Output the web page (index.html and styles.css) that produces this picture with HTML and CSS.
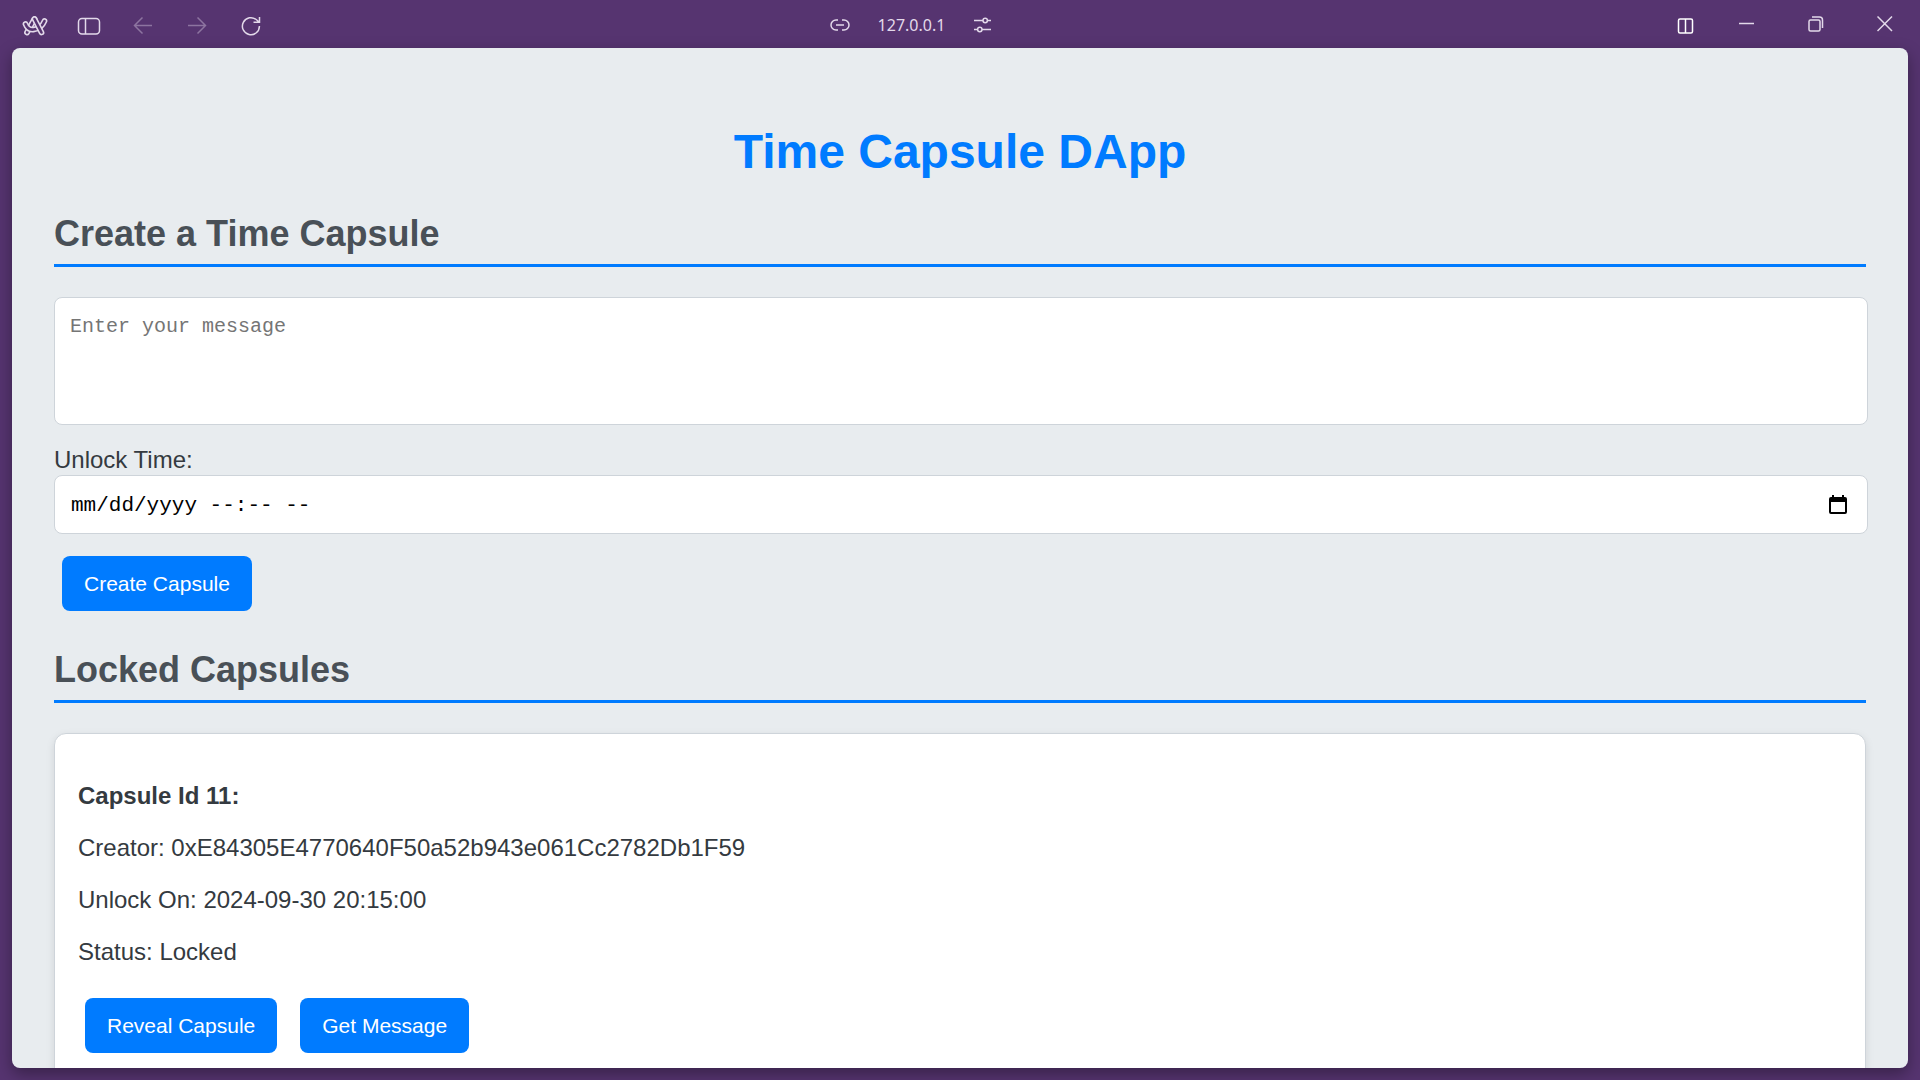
FILE: index.html
```
<!DOCTYPE html>
<html lang="en">
<head>
<meta charset="utf-8">
<title>Time Capsule DApp</title>
<link rel="stylesheet" href="styles.css">
</head>
<body>
<div class="browser">
  <header class="toolbar">
    <nav class="tools" aria-label="Navigation">
      <button class="tool" type="button" aria-label="Menu">
        <svg width="26" height="22" viewBox="0 0 26 22">
          <path class="outer" d="M12.500 4L5 17.500"/>
          <path class="inner" d="M12.500 4L5 17.500"/>
          <path class="outer" d="M3.500 9C5 13 8 15 11.500 14.500C17 14 20.500 11 22.500 6"/>
          <path class="inner" d="M3.500 9C5 13 8 15 11.500 14.500C17 14 20.500 11 22.500 6"/>
          <path class="outer" d="M12.500 4L19.500 17.500"/>
          <path class="inner" d="M12.500 4L19.500 17.500"/>
        </svg>
      </button>
      <button class="tool" type="button" aria-label="Sidebar">
        <svg width="24" height="20" viewBox="0 0 24 20"><rect class="line" x="1.500" y="2.500" width="21" height="15.500" rx="3.500"/><path class="line" d="M8.500 2.500V18"/></svg>
      </button>
      <button class="tool faded" type="button" aria-label="Back">
        <svg width="20" height="20" viewBox="0 0 20 20"><path class="line" d="M9.500 1.500L1.500 9.500L9.500 17.500M1.500 9.500H19"/></svg>
      </button>
      <button class="tool faded" type="button" aria-label="Forward">
        <svg width="20" height="20" viewBox="0 0 20 20"><path class="line" d="M10.500 1.500L18.500 9.500L10.500 17.500M18.500 9.500H1"/></svg>
      </button>
      <button class="tool" type="button" aria-label="Reload">
        <svg width="20" height="20" viewBox="0 0 20 20"><path class="line" d="M18.400 10A8.500 8.500 0 1 1 15.500 3.800L18 6M18.500 1V6.200H12.500"/></svg>
      </button>
    </nav>
    <div class="address">
      <svg width="20" height="14" viewBox="0 0 20 14"><path class="line" d="M8 2H6a5 5 0 0 0 0 10H8M12 2h2a5 5 0 0 1 0 10H12M6 7h8"/></svg>
      <span>127.0.0.1</span>
      <svg width="20" height="18" viewBox="0 0 20 18"><path class="line" d="M1 4.500H10M14.500 4.500H18M1 13.500H4.500M9 13.500H18"/><circle class="line" cx="12.200" cy="4.500" r="2.200"/><circle class="line" cx="6.800" cy="13.500" r="2.200"/></svg>
    </div>
    <div class="window-controls">
      <button class="tool bright" type="button" aria-label="Split view">
        <svg width="18" height="18" viewBox="0 0 18 18"><rect class="line" x="2.500" y="2" width="14" height="14" rx="1.500"/><path class="line" d="M9.500 2V16"/></svg>
      </button>
      <button class="control" type="button" aria-label="Minimize">
        <svg width="16" height="16" viewBox="0 0 16 16"><path class="line" d="M0 7.500H15"/></svg>
      </button>
      <button class="control" type="button" aria-label="Restore">
        <svg width="16" height="16" viewBox="0 0 16 16"><rect class="line" x="1" y="4" width="11" height="11" rx="1.500"/><path class="line" d="M4 1H11.500a3 3 0 0 1 3 3V12"/></svg>
      </button>
      <button class="control" type="button" aria-label="Close">
        <svg width="16" height="16" viewBox="0 0 16 16"><path class="line" d="M.5 .5L15 15M15 .5L.5 15"/></svg>
      </button>
    </div>
  </header>
  <main class="page">
    <h1>Time Capsule DApp</h1>
    <section>
      <h2>Create a Time Capsule</h2>
      <form class="create">
        <textarea class="field message" placeholder="Enter your message" aria-label="Message"></textarea>
        <label for="unlock">Unlock Time:</label>
        <div class="field date">
          <input id="unlock" type="text" placeholder="mm/dd/yyyy --:-- --">
          <button type="button" aria-label="Show date picker">
            <svg width="18" height="20" viewBox="0 0 18 20"><path d="M2 2H3V0H5V2H13V0H15V2H16A2 2 0 0 1 18 4V17A2 2 0 0 1 16 19H2A2 2 0 0 1 0 17V4A2 2 0 0 1 2 2ZM2 7V17H16V7Z" fill="#000" fill-rule="evenodd"/></svg>
          </button>
        </div>
        <button class="action" type="button">Create Capsule</button>
      </form>
    </section>
    <section>
      <h2>Locked Capsules</h2>
      <article class="card">
        <p><strong>Capsule Id 11:</strong></p>
        <p>Creator: 0xE84305E4770640F50a52b943e061Cc2782Db1F59</p>
        <p>Unlock On: 2024-09-30 20:15:00</p>
        <p>Status: Locked</p>
        <div class="actions">
          <button class="action" type="button">Reveal Capsule</button>
          <button class="action" type="button">Get Message</button>
        </div>
      </article>
    </section>
  </main>
</div>
</body>
</html>
```
FILE: styles.css
```
* { box-sizing: border-box; }

body {
  margin: 0;
  background: #563470;
  color: #343a40;
  font: 24px/28px "Liberation Sans", Arial, sans-serif;
}

.browser {
  display: flex;
  flex-direction: column;
  height: 100vh;
  padding: 0 12px 12px;
  overflow: hidden;
}

/* Browser toolbar */
.toolbar {
  display: grid;
  grid-template-columns: 1fr auto 1fr;
  flex: none;
  height: 48px;
  margin: 0 -11px 0 -4px;
  color: #e3d9ea;
}

.tools, .window-controls { display: flex; }
.window-controls { justify-content: flex-end; }

.tool, .control {
  display: flex;
  align-items: center;
  justify-content: center;
  padding: 4px 0 0;
  border: 0;
  background: none;
  color: inherit;
}

.tool { width: 54px; }
.control { width: 69px; padding: 0; }
.faded { color: #8d74a0; }
.bright { color: #fff; }

.address {
  display: flex;
  align-items: center;
  gap: 28px;
  padding: 2px 104px 0 0;
  font: 16px/24px "Noto Sans", sans-serif;
}

.line {
  fill: none;
  stroke: currentColor;
  stroke-width: 1.5;
}

/* Ribbon strokes of the logo: a light outline with a bar-coloured core */
.outer, .inner {
  fill: none;
  stroke: currentColor;
  stroke-width: 5.8;
  stroke-linecap: round;
  stroke-linejoin: round;
}

.inner { stroke: #563470; stroke-width: 2.6; }

/* Page */
.page {
  flex: 1;
  min-height: 0;
  padding: 76px 42px 42px;
  overflow: auto;
  scrollbar-width: none;
  border-radius: 8px;
  background: #e8ecef;
  box-shadow: 0 6px 16px rgba(0, 0, 0, .35);
}

h1 {
  margin: 0 0 33px;
  color: #007bff;
  font-size: 48px;
  line-height: 56px;
  text-align: center;
}

h2 {
  margin: 0 0 30px;
  padding-bottom: 9px;
  border-bottom: 3px solid #007bff;
  color: #495057;
  font-size: 36px;
  line-height: 42px;
}

.create {
  display: flex;
  flex-direction: column;
  align-items: flex-start;
  margin-bottom: 38px;
}

.field {
  width: calc(100% + 2px);
  border: 1px solid #ced4da;
  border-radius: 8px;
  background: #fff;
  color: #000;
  font: 20px/24px "Liberation Mono", monospace;
}

.message {
  height: 128px;
  margin-bottom: 21px;
  padding: 17px 15px;
  resize: none;
}

.date {
  display: flex;
  align-items: center;
  height: 59px;
  margin-top: 1px;
  padding: 0 20px 0 16px;
}

.date input {
  flex: 1;
  padding: 2px 0 0;
  border: 0;
  background: none;
  color: inherit;
  font: 21px/24px "Liberation Mono", monospace;
}

.date input::placeholder { color: #000; }

.date button {
  display: flex;
  padding: 0;
  border: 0;
  background: none;
}

.action {
  height: 55px;
  padding: 0 22px;
  border: 0;
  border-radius: 8px;
  background: #007bff;
  color: #fff;
  font: 21px/24px "Liberation Sans", Arial, sans-serif;
}

.create .action { margin: 22px 8px 0; }

.card {
  padding: 48px 23px 32px;
  border: 1px solid #ced4da;
  border-radius: 12px;
  background: #fff;
  box-shadow: 0 3px 8px rgba(0, 0, 0, .1);
}

.card p { margin: 0 0 24px; }

.actions {
  display: flex;
  gap: 23px;
  padding: 8px 7px 0;
}
```
